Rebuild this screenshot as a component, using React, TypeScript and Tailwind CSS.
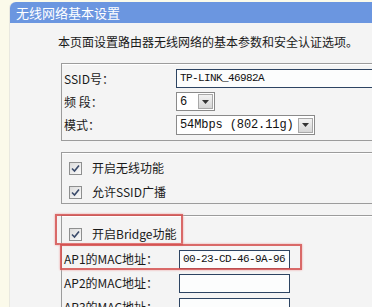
const cn = '"Noto Sans CJK SC", "Noto Sans", sans-serif'
const mono = '"Liberation Mono", "Noto Sans CJK SC", monospace'

function Check() {
  return (
    <span className="w-[13px] h-[13px] border border-[#8e8f8f] bg-gradient-to-br from-[#dcdcdc] to-[#fafafa] flex items-center justify-center shrink-0">
      <svg width="9" height="9" viewBox="0 0 9 9">
        <path d="M1 4.5 L3.5 7 L8 1.5" fill="none" stroke="#3a4a6a" strokeWidth="1.6" />
      </svg>
    </span>
  )
}

function Arrow() {
  return (
    <span className="w-[15px] h-[15px] border border-[#a8a8a8] bg-gradient-to-b from-[#f2f2f2] to-[#d6d6d6] flex items-center justify-center shrink-0">
      <svg width="7" height="4" viewBox="0 0 7 4">
        <path d="M0 0 H7 L3.5 4 Z" fill="#333" />
      </svg>
    </span>
  )
}

function Label({ text }: { text: string }) {
  return (
    <span className="w-[114px] pl-[2px] shrink-0 text-[12px] text-[#1a1a1a]" style={{ fontFamily: cn }}>
      {text}
    </span>
  )
}

export default function App() {
  return (
    <div className="w-[372px] h-[307px] overflow-hidden bg-[#fbfaea] pt-[2px] pl-[9px]">
      <div className="w-[420px] h-[330px] rounded-tl-[6px] bg-[#f4f4f4] border-l border-[#e8e8e0]">
        <div
          className="h-[21px] rounded-tl-[6px] bg-[#6b96e0] text-white text-[13px] leading-[21px] pl-[6px]"
          style={{ fontFamily: cn }}
        >
          无线网络基本设置
        </div>

        <div className="mt-[10px] pl-[48px] h-[18px] leading-[18px] text-[12px] text-[#1a1a1a]" style={{ fontFamily: cn }}>
          本页面设置路由器无线网络的基本参数和安全认证选项。
        </div>

        {/* 基本参数 */}
        <div className="mt-[12px] ml-[51px] h-[78px] border border-[#9c9c9c] shadow-[inset_0_1px_0_#ffffff] flex flex-col gap-[4px] pt-[5px]">
          <div className="h-[19px] flex items-center">
            <Label text="SSID号：" />
            <span
              className="h-[19px] w-[220px] border border-[#2d4462] bg-[#fcfdfd] pl-[3px] text-[11px] tracking-[-0.6px] leading-[17px] text-[#111]"
              style={{ fontFamily: mono }}
            >
              TP-LINK_46982A
            </span>
          </div>
          <div className="h-[19px] flex items-center">
            <Label text="频 段：" />
            <span className="h-[19px] w-[39px] border border-[#8a8a8a] bg-white flex items-center justify-between pl-[3px] pr-[1px]">
              <span className="text-[12px] text-[#111]" style={{ fontFamily: mono }}>6</span>
              <Arrow />
            </span>
          </div>
          <div className="h-[20px] flex items-center">
            <Label text="模式：" />
            <span className="h-[20px] w-[139px] border border-[#8a8a8a] bg-white flex items-center justify-between pl-[3px] pr-[1px]">
              <span className="text-[12px] tracking-[-0.1px] text-[#111]" style={{ fontFamily: mono }}>54Mbps (802.11g)</span>
              <Arrow />
            </span>
          </div>
        </div>

        {/* 开关 */}
        <div className="mt-[11px] ml-[51px] h-[52px] border border-[#9c9c9c] shadow-[inset_0_1px_0_#ffffff] flex flex-col gap-[2px] pt-[4px] pl-[7px]">
          <div className="h-[22px] flex items-center gap-[10px]">
            <Check />
            <span className="text-[12px] text-[#1a1a1a]" style={{ fontFamily: cn }}>开启无线功能</span>
          </div>
          <div className="h-[22px] flex items-center gap-[10px]">
            <Check />
            <span className="text-[12px] text-[#1a1a1a]" style={{ fontFamily: cn }}>允许SSID广播</span>
          </div>
        </div>

        {/* Bridge */}
        <div className="relative mt-[11px] ml-[51px] h-[110px] border border-[#9c9c9c] shadow-[inset_0_1px_0_#ffffff] flex flex-col gap-[2px] pt-[6px]">
          <div className="h-[24px] flex items-center gap-[10px] pl-[7px]">
            <Check />
            <span className="text-[12px] text-[#1a1a1a]" style={{ fontFamily: cn }}>开启Bridge功能</span>
          </div>
          {['AP1的MAC地址：', 'AP2的MAC地址：', 'AP3的MAC地址：'].map((t, i) => (
            <div key={t} className="h-[22px] flex items-center">
              <span className="w-[117px] pl-[2px] shrink-0 text-[12px] text-[#1a1a1a]" style={{ fontFamily: cn }}>
                {t}
              </span>
              <span
                className="h-[19px] w-[111px] border border-[#2d4462] bg-[#fcfdfd] pl-[3px] text-[11px] tracking-[-0.6px] leading-[17px] text-[#111]"
                style={{ fontFamily: mono }}
              >
                {i === 0 ? '00-23-CD-46-9A-96' : ''}
              </span>
            </div>
          ))}

          {/* 红框标注 */}
          <div className="absolute left-[-7px] top-[-2px] w-[128px] h-[31px] border-2 border-[#d4504f]/85 shadow-[0_0_2px_#f0a0a0]" />
          <div className="absolute left-[-2px] top-[28px] w-[242px] h-[26px] border-2 border-[#d4504f]/85 shadow-[0_0_2px_#f0a0a0]" />
        </div>
      </div>
    </div>
  )
}
